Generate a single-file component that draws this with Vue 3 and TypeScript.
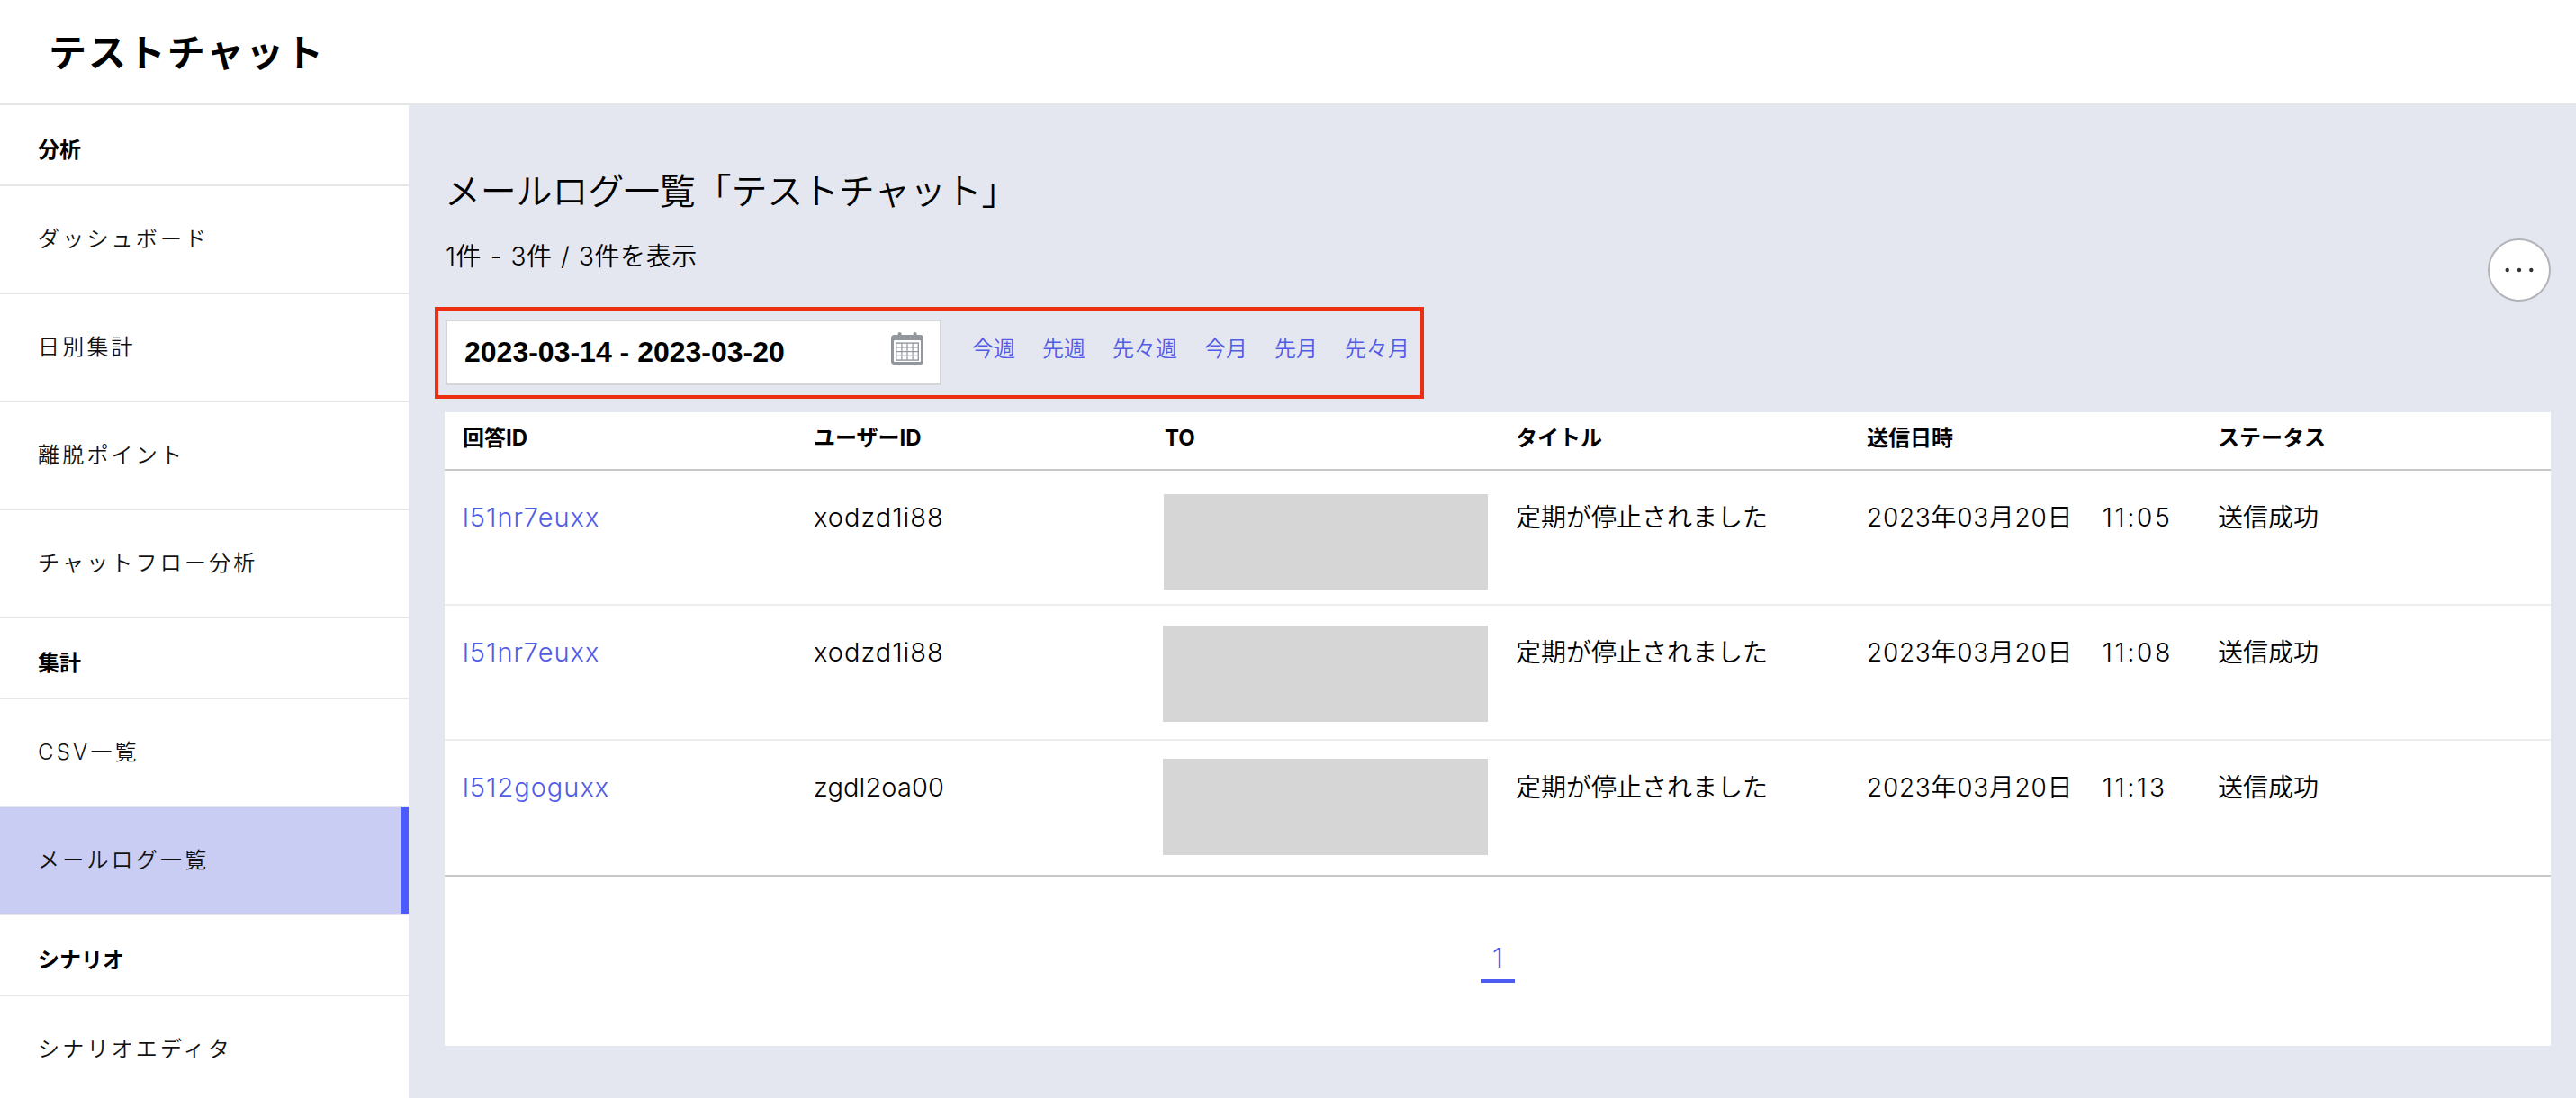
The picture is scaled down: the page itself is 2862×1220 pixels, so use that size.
<script setup lang="ts">
interface MenuEntry {
  label: string
  heading?: boolean
  active?: boolean
}

interface MailLog {
  answerId: string
  userId: string
  title: string
  date: string
  time: string
  status: string
}

const menu: MenuEntry[] = [
  { label: '分析', heading: true },
  { label: 'ダッシュボード' },
  { label: '日別集計' },
  { label: '離脱ポイント' },
  { label: 'チャットフロー分析' },
  { label: '集計', heading: true },
  { label: 'CSV一覧' },
  { label: 'メールログ一覧', active: true },
  { label: 'シナリオ', heading: true },
  { label: 'シナリオエディタ' },
]

const periods: string[] = ['今週', '先週', '先々週', '今月', '先月', '先々月']

const columns: string[] = ['回答ID', 'ユーザーID', 'TO', 'タイトル', '送信日時', 'ステータス']

const logs: MailLog[] = [
  { answerId: 'l51nr7euxx', userId: 'xodzd1i88', title: '定期が停止されました', date: '2023年03月20日', time: '11:05', status: '送信成功' },
  { answerId: 'l51nr7euxx', userId: 'xodzd1i88', title: '定期が停止されました', date: '2023年03月20日', time: '11:08', status: '送信成功' },
  { answerId: 'l512goguxx', userId: 'zgdl2oa00', title: '定期が停止されました', date: '2023年03月20日', time: '11:13', status: '送信成功' },
]
</script>

<template>
  <div class="app">
    <header class="topbar">
      <h1 class="brand">テストチャット</h1>
    </header>
    <div class="body">
      <nav class="sidebar">
        <div
          v-for="entry in menu"
          :key="entry.label"
          class="entry"
          :class="{ heading: entry.heading, active: entry.active }"
        >
          {{ entry.label }}
        </div>
      </nav>
      <main class="content">
        <div class="intro">
          <div>
            <h2 class="page-title">メールログ一覧「テストチャット」</h2>
            <p class="count">1件 - 3件 / 3件を表示</p>
          </div>
          <button class="more" type="button" aria-label="メニュー">
            <svg width="32" height="8" viewBox="0 0 32 8">
              <circle cx="2.7" cy="4" r="2.2" />
              <circle cx="16" cy="4" r="2.2" />
              <circle cx="29.3" cy="4" r="2.2" />
            </svg>
          </button>
        </div>

        <div class="filter">
          <div class="range">
            <span class="range-text">2023-03-14 - 2023-03-20</span>
            <svg class="calendar" width="36" height="36" viewBox="0 0 36 36">
              <rect x="0" y="3" width="36" height="33" rx="3.5" fill="#92979e" />
              <rect x="7.6" y="0" width="4" height="6" rx="2" fill="#92979e" />
              <rect x="24.6" y="0" width="4" height="6" rx="2" fill="#92979e" />
              <rect x="3" y="9" width="30" height="24" rx="1" fill="#fff" />
              <rect x="5" y="11.4" width="26" height="20.4" fill="#92979e" />
              <g fill="#fff">
                <template v-for="r in 4" :key="r">
                  <rect
                    v-for="c in 4"
                    :key="c"
                    :x="6.4 + (c - 1) * 6.1"
                    :y="12.8 + (r - 1) * 4.7"
                    width="4.9"
                    height="3.5"
                  />
                </template>
              </g>
            </svg>
          </div>
          <div class="periods">
            <a v-for="p in periods" :key="p">{{ p }}</a>
          </div>
        </div>

        <section class="panel">
          <div class="row head">
            <div v-for="c in columns" :key="c" class="cell">{{ c }}</div>
          </div>
          <div v-for="(log, i) in logs" :key="i" class="row log">
            <div class="cell id link">{{ log.answerId }}</div>
            <div class="cell id">{{ log.userId }}</div>
            <div class="cell masked"><div class="mask"></div></div>
            <div class="cell">{{ log.title }}</div>
            <div class="cell date">{{ log.date }}　<span class="time">{{ log.time }}</span></div>
            <div class="cell">{{ log.status }}</div>
          </div>
          <div class="pager"><a class="page">1</a></div>
        </section>
      </main>
    </div>
  </div>
</template>

<style>
body {
  margin: 0;
  overflow: hidden;
}
</style>

<style scoped>
.app {
  width: 2862px;
  height: 1220px;
  overflow: hidden;
  display: flex;
  flex-direction: column;
  background: #fff;
  color: #000;
  font-family: Inter, 'Noto Sans CJK JP', sans-serif;
  font-weight: 350;
}
.topbar {
  box-sizing: border-box;
  flex: none;
  height: 117px;
  border-bottom: 2px solid #e5e6e8;
  padding-left: 54px;
}
.brand {
  margin: 0;
  font-size: 42px;
  line-height: 117px;
  letter-spacing: 1.9px;
  font-weight: 700;
  color: #000;
}
.body {
  flex: 1;
  display: flex;
  min-height: 0;
}
.sidebar {
  flex: none;
  width: 454px;
  overflow: hidden;
}
.entry {
  box-sizing: border-box;
  height: 120px;
  line-height: 118px;
  padding-left: 42px;
  border-bottom: 2px solid #e6e7e9;
  font-size: 24px;
  letter-spacing: 3.2px;
  color: #111;
}
.entry.heading {
  height: 90px;
  line-height: 100px;
  letter-spacing: 0;
  font-weight: 700;
  color: #000;
}
.entry.active {
  background: #cacdf3;
  background-clip: padding-box;
  border-bottom-color: #e4e7ef;
  box-shadow: inset -8px 0 0 #4a5cff;
}
.content {
  box-sizing: border-box;
  flex: 1;
  background: #e4e7ef;
  padding: 70px 28px 0 40px;
}
.intro {
  display: flex;
  justify-content: space-between;
  height: 154px;
}
.page-title {
  margin: 0;
  font-size: 40px;
  line-height: 52px;
  letter-spacing: -0.2px;
  font-weight: 350;
  color: #000;
  white-space: nowrap;
}
.count {
  margin: 26px 0 0 1px;
  font-size: 28px;
  line-height: 40px;
  letter-spacing: 0.6px;
  word-spacing: 1px;
}
.more {
  box-sizing: border-box;
  width: 70px;
  height: 70px;
  margin-top: 78px;
  padding: 0;
  border: 2px solid #b3b3b8;
  border-radius: 50%;
  background: #fff;
  display: flex;
  align-items: center;
  justify-content: center;
}
.more svg {
  fill: #333;
}
.filter {
  box-sizing: border-box;
  width: 1099px;
  height: 102px;
  margin-left: -11px;
  border: 4px solid #eb2f10;
  padding: 10px 0 0 8px;
  display: flex;
}
.range {
  box-sizing: border-box;
  width: 551px;
  height: 73px;
  border: 2px solid #d3d5d7;
  background: #fff;
  padding: 0 18px 0 19px;
  display: flex;
  justify-content: space-between;
}
.range-text {
  font-family: 'Liberation Sans', Arial, sans-serif;
  font-weight: 700;
  font-size: 32px;
  line-height: 68px;
  color: #000;
}
.calendar {
  margin-top: 12px;
}
.periods {
  display: flex;
  gap: 30px;
  margin-left: 34px;
  font-size: 24px;
  line-height: 66px;
  color: #515ce6;
  white-space: nowrap;
}
.panel {
  width: 2340px;
  height: 704px;
  margin-top: 15px;
  background: #fff;
}
.row {
  box-sizing: border-box;
  display: grid;
  grid-template-columns: repeat(6, 390px);
}
.cell {
  padding-left: 20px;
  white-space: nowrap;
}
.head {
  height: 65px;
  border-bottom: 2px solid #c8c8c8;
  font-size: 24px;
  line-height: 57px;
  font-weight: 700;
  color: #000;
}
.log {
  height: 150px;
  border-bottom: 2px solid #ededee;
  font-size: 28px;
  line-height: 40px;
}
.log .cell {
  padding-top: 32px;
}
.log .id {
  font-size: 29px;
  letter-spacing: 1px;
}
.log:nth-last-child(2) .id:nth-child(2) {
  letter-spacing: 0.1px;
}
.date {
  letter-spacing: 0.7px;
}
.time {
  margin-left: 4px;
  letter-spacing: 2.8px;
}
.log:nth-last-child(2) {
  height: 151px;
  border-bottom-color: #c8c8c8;
}
.log .masked {
  padding: 22px 0 0 18px;
}
.log:nth-child(2) .masked {
  padding: 26px 0 0 19px;
}
.log:nth-child(4) .masked {
  padding-top: 20px;
}
.mask {
  width: 361px;
  height: 107px;
  background: #d6d6d6;
}
.log:nth-child(2) .mask {
  width: 360px;
  height: 106px;
}
.link {
  color: #515ce6;
}
.pager {
  display: flex;
  justify-content: center;
  padding-top: 70px;
}
.page {
  box-sizing: border-box;
  width: 38px;
  height: 48px;
  border-bottom: 4px solid #4c5bf0;
  font-size: 30px;
  line-height: 41px;
  text-align: center;
  color: #515ce6;
}
</style>
